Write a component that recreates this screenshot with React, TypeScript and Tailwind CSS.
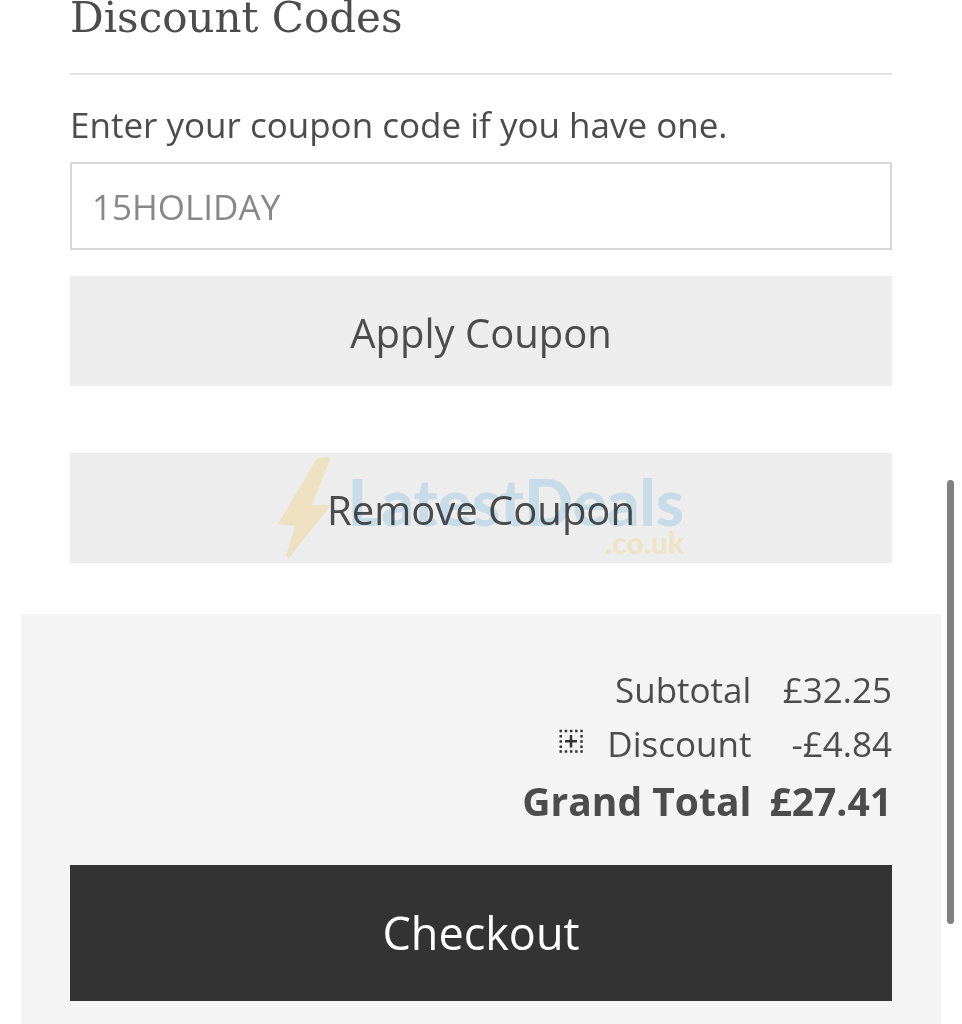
import React, { useState } from "react";

const Watermark: React.FC = () => (
    <div
        aria-hidden="true"
        className="pointer-events-none absolute inset-0 flex items-center justify-center mix-blend-multiply"
    >
        <svg viewBox="0 0 54 102" className="h-[102px] w-[54px] shrink-0 fill-[#fff3d0]">
            <path d="M39 1L51 0L52 3L34 48H53L11 101L8 99L17 69L0 67Z" />
        </svg>
        <div className="ml-4 flex flex-col items-end pt-3 whitespace-nowrap font-['Lato',sans-serif] font-black">
            <span className="text-[64px] leading-[56px] text-[#d7ecfa]">LatestDeals</span>
            <span className="text-[30px] leading-6 text-[#fff5d6]">.co.uk</span>
        </div>
    </div>
);

const DiscountIcon: React.FC = () => (
    <svg viewBox="0 0 24 24" className="mb-1.5 h-6 w-6 text-[#333]" fill="none" stroke="currentColor">
        <path
            strokeWidth="2.5"
            strokeDasharray="2.5 2.7"
            d="M0.5 2H24M0.5 22.5H24M1.75 6V20M22.5 6V20"
        />
        <path strokeWidth="2.5" d="M12 6V18.5M6 12.25H18" />
    </svg>
);

const App: React.FC = () => {
    const [coupon, setCoupon] = useState("15HOLIDAY");

    const handleSubmit = (e: React.FormEvent) => {
        e.preventDefault();
    };

    return (
        <div className="relative min-h-screen overflow-hidden bg-white font-['Open_Sans','Noto_Sans',sans-serif] text-[#4c4c4c] antialiased">
            {/* Coupon form */}
            <form onSubmit={handleSubmit} className="px-[70px]">
                <h2 className="h-[75px] border-b-2 border-[#e2e2e2] font-['DejaVu_Serif',serif] text-[42px] leading-9">
                    Discount Codes
                </h2>
                <label htmlFor="coupon" className="block pt-[26px] text-[35px] leading-[48px]">
                    Enter your coupon code if you have one.
                </label>
                <input
                    id="coupon"
                    type="text"
                    value={coupon}
                    onChange={(e) => setCoupon(e.target.value)}
                    className="mt-[13px] block h-[88px] w-full border-2 border-[#d8d8d8] bg-white px-5 text-[35px] text-[#888] outline-none"
                />
                <button type="submit" className="mt-[26px] block h-[110px] w-full bg-[#ededed] pt-1 text-[40px]">
                    Apply Coupon
                </button>
                <div className="relative mt-[67px]">
                    <button
                        type="button"
                        onClick={() => setCoupon("")}
                        className="block h-[110px] w-full bg-[#ededed] pt-1 text-[40px]"
                    >
                        Remove Coupon
                    </button>
                    <Watermark />
                </div>
            </form>

            {/* Totals */}
            <section className="mx-[21px] mt-[51px] bg-[#f4f4f4] px-[49px] pt-[49px] pb-6">
                <table className="ml-auto text-right text-[35px] leading-[54px]">
                    <tbody>
                        <tr>
                            <th scope="row" className="pr-[18px] font-normal">Subtotal</th>
                            <td>£32.25</td>
                        </tr>
                        <tr>
                            <th scope="row" className="pr-[18px] font-normal">
                                <span className="flex items-center justify-end gap-6">
                                    <DiscountIcon />
                                    Discount
                                </span>
                            </th>
                            <td>-£4.84</td>
                        </tr>
                        <tr className="text-[39px] leading-[60px] font-bold">
                            <th scope="row" className="pr-[18px]">Grand Total</th>
                            <td>£27.41</td>
                        </tr>
                    </tbody>
                </table>
                <button type="button" className="mt-[34px] block h-[136px] w-full bg-[#333] text-[45px] text-white">
                    Checkout
                </button>
            </section>

            {/* Scroll indicator */}
            <div className="absolute top-[480px] right-2 h-[444px] w-[7px] rounded-full bg-[#808080]" />
        </div>
    );
};

export default App;
